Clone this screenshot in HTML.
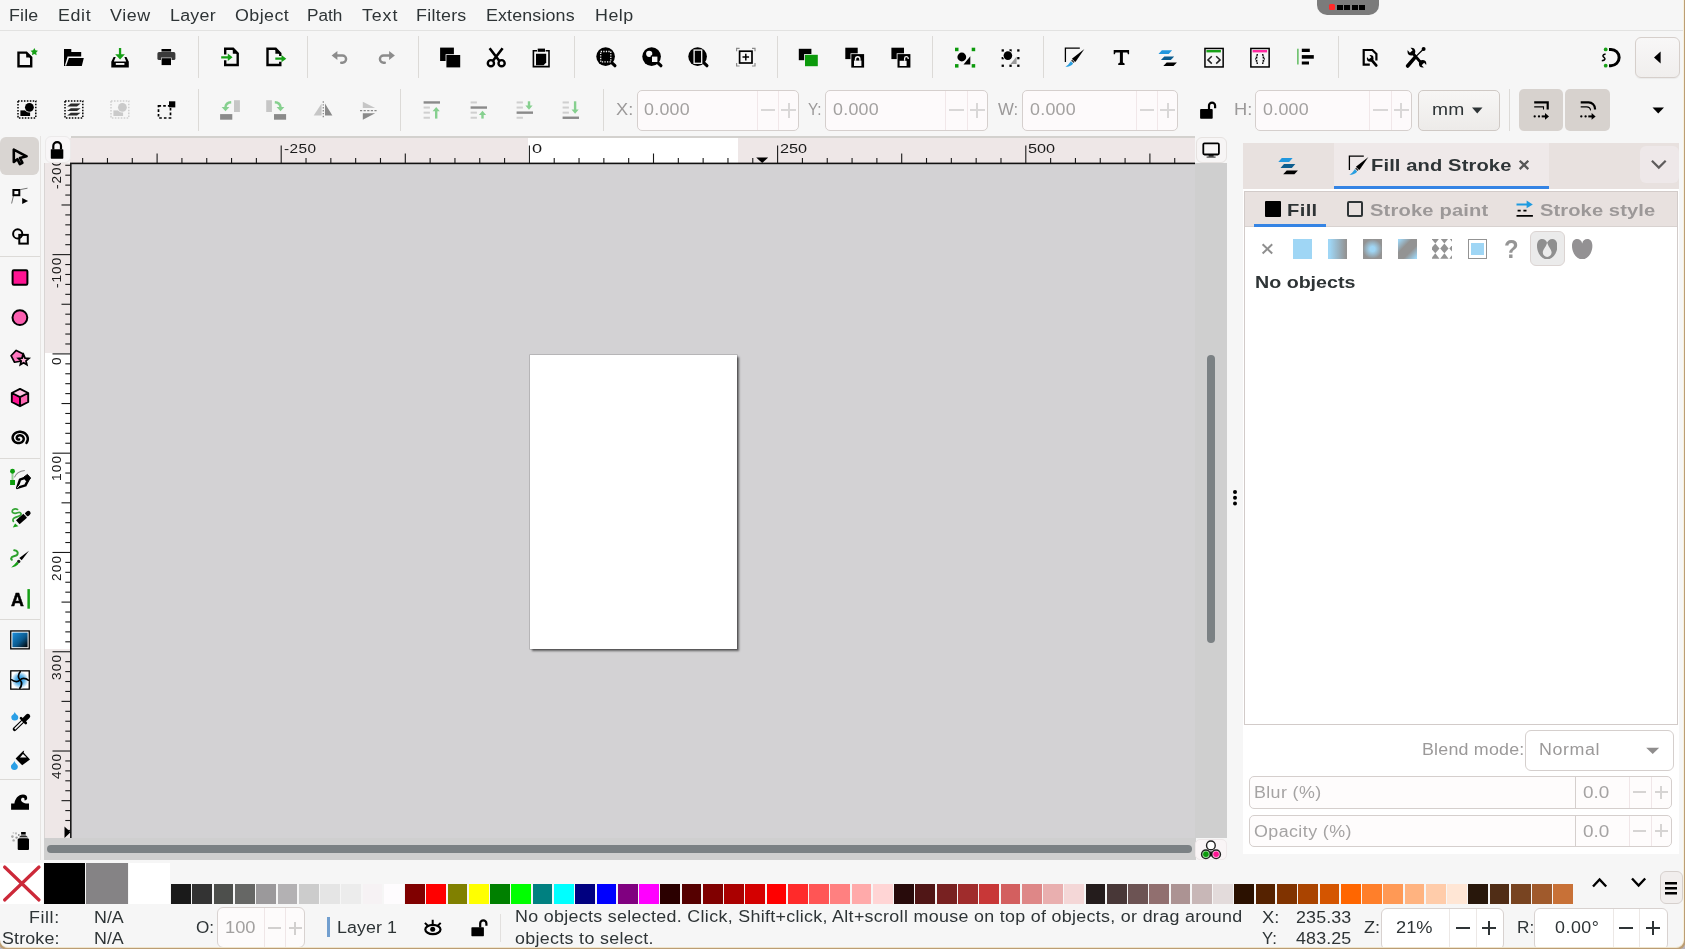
<!DOCTYPE html>
<html><head><meta charset="utf-8"><title>Inkscape</title><style>
html,body{margin:0;padding:0;}
body{width:1685px;height:949px;overflow:hidden;background:#b9b4bd;font-family:"Liberation Sans",sans-serif;}
#w{will-change:transform;position:absolute;left:0;top:0;width:1683px;height:946.9px;background:#f6f6f6;overflow:hidden;border-right:1px solid #f7f0dc;border-bottom:0.7px solid #efe4cc;border-radius:0 0 8px 8px;box-shadow:0 0 0 2.2px #bb9d74;}
#w div,#w svg,#w span{position:absolute;}
.t{white-space:nowrap;line-height:20px;transform-origin:left center;}
</style></head><body><div id="w">
<div style="left:0.00px;top:0.00px;width:1685.00px;height:30.00px;background:#f6f6f6;border-bottom:1px solid #e2e2e1;"></div>
<span class="t" style="left:9.47px;top:5.53px;font-size:15.80px;color:#2e3436;letter-spacing:0.155px;transform:scaleX(1.1300);">File</span>
<span class="t" style="left:58.47px;top:5.53px;font-size:15.80px;color:#2e3436;letter-spacing:0.540px;transform:scaleX(1.1300);">Edit</span>
<span class="t" style="left:109.57px;top:5.53px;font-size:15.80px;color:#2e3436;letter-spacing:0.536px;transform:scaleX(1.1300);">View</span>
<span class="t" style="left:170.07px;top:5.53px;font-size:15.80px;color:#2e3436;letter-spacing:0.229px;transform:scaleX(1.1300);">Layer</span>
<span class="t" style="left:234.67px;top:5.53px;font-size:15.80px;color:#2e3436;letter-spacing:0.371px;transform:scaleX(1.1300);">Object</span>
<span class="t" style="left:307.27px;top:5.53px;font-size:15.80px;color:#2e3436;transform:scaleX(1.0890);">Path</span>
<span class="t" style="left:361.77px;top:5.53px;font-size:15.80px;color:#2e3436;letter-spacing:0.782px;transform:scaleX(1.1300);">Text</span>
<span class="t" style="left:415.87px;top:5.53px;font-size:15.80px;color:#2e3436;letter-spacing:0.250px;transform:scaleX(1.1300);">Filters</span>
<span class="t" style="left:486.07px;top:5.53px;font-size:15.80px;color:#2e3436;letter-spacing:0.124px;transform:scaleX(1.1300);">Extensions</span>
<span class="t" style="left:594.97px;top:5.53px;font-size:15.80px;color:#2e3436;letter-spacing:0.435px;transform:scaleX(1.1300);">Help</span>
<div style="left:1317.20px;top:-10.00px;width:61.70px;height:24.70px;background:#7b7b7b;border-radius:10px;"></div><div style="left:1329.10px;top:4.40px;width:5.90px;height:5.50px;background:#ff2a2a;border-radius:1.5px;"></div><div style="left:1337.10px;top:5.10px;width:5.70px;height:4.80px;background:#000;"></div><div style="left:1344.20px;top:5.10px;width:5.70px;height:4.80px;background:#000;"></div><div style="left:1352.10px;top:5.10px;width:5.70px;height:4.80px;background:#000;"></div><div style="left:1359.20px;top:5.10px;width:5.70px;height:4.80px;background:#000;"></div>
<div style="left:198.00px;top:36.00px;width:1.00px;height:42.00px;background:#dcdad7;"></div>
<div style="left:307.00px;top:36.00px;width:1.00px;height:42.00px;background:#dcdad7;"></div>
<div style="left:418.00px;top:36.00px;width:1.00px;height:42.00px;background:#dcdad7;"></div>
<div style="left:574.00px;top:36.00px;width:1.00px;height:42.00px;background:#dcdad7;"></div>
<div style="left:777.00px;top:36.00px;width:1.00px;height:42.00px;background:#dcdad7;"></div>
<div style="left:932.00px;top:36.00px;width:1.00px;height:42.00px;background:#dcdad7;"></div>
<div style="left:1043.00px;top:36.00px;width:1.00px;height:42.00px;background:#dcdad7;"></div>
<div style="left:1338.00px;top:36.00px;width:1.00px;height:42.00px;background:#dcdad7;"></div>
<svg style="left:14.00px;top:45.00px" width="24" height="24" viewBox="0 0 24 24"><path d="M4.5 7.6 H12.4 L17.2 12.4 V21.2 H4.5 Z" fill="none" stroke="#000" stroke-width="2.4" stroke-linejoin="miter"/><path d="M12.2 7 V12.6 H17.8 Z" fill="#000"/><polygon points="20.30,2.90 21.48,5.28 24.10,5.66 22.20,7.52 22.65,10.14 20.30,8.90 17.95,10.14 18.40,7.52 16.50,5.66 19.12,5.28" fill="#17a017"/></svg>
<svg style="left:61.00px;top:45.00px" width="24" height="24" viewBox="0 0 24 24"><path d="M3 4 H10.3 V6.9 H20.2 V11.4 H6.6 L4.2 19.6 L3 19.6 Z" fill="#000"/><path d="M7.9 12.9 H22.8 L20.8 21 H3 L5 21 Z" fill="#000"/><path d="M3 21 V17 L4.6 21 Z" fill="#000"/></svg>
<svg style="left:107.00px;top:45.00px" width="24" height="24" viewBox="0 0 24 24"><path d="M6.6 12 L4.3 16.8 V22.4 H21.8 V16.8 L19.5 12 H17.4 L19.2 16.6 H6.9 L8.7 12 Z" fill="#000"/><rect x="8.8" y="18" width="8.6" height="1.9" fill="#f6f6f6"/><path d="M11.9 2.9 H14.2 V9.3 H17.9 L13.05 14.6 L8.2 9.3 H11.9 Z" fill="#17a017"/></svg>
<svg style="left:154.00px;top:45.00px" width="24" height="24" viewBox="0 0 24 24"><rect x="7.5" y="4" width="9.6" height="2.6" fill="#000"/><rect x="3.4" y="7.1" width="18" height="8" rx="1.6" fill="#3a3a3a"/><rect x="7.0" y="12.6" width="10.6" height="7.9" fill="#f6f6f6"/><rect x="7.6" y="13.2" width="9.4" height="6.9" fill="#000"/></svg>
<svg style="left:218.00px;top:45.00px" width="24" height="24" viewBox="0 0 24 24"><path d="M7.2 9.4 V3.8 H15.1 L19.7 8.4 V20 H7.2 V15.2" fill="none" stroke="#000" stroke-width="2.4"/><path d="M14.8 3.2 V8.7 H20.3 Z" fill="#000"/><path d="M3.2 11.2 H9.8 V8.6 L14.6 12.3 L9.8 16 V13.4 H3.2 Z" fill="#17a017"/></svg>
<svg style="left:263.00px;top:45.00px" width="24" height="24" viewBox="0 0 24 24"><path d="M17.3 11 V8.4 L12.7 3.8 H4.5 V20 H17.3 V16.8" fill="none" stroke="#000" stroke-width="2.4"/><path d="M12.4 3.2 V8.7 H17.9 Z" fill="#000"/><path d="M12.3 12.6 H18.5 V10.1 L23.3 13.7 L18.5 17.3 V14.8 H12.3 Z" fill="#17a017"/></svg>
<svg style="left:328.00px;top:45.00px" width="24" height="24" viewBox="0 0 24 24"><path d="M8.5 10.5 H14.5 A3.6 3.6 0 0 1 14.5 17.7 H13.2" fill="none" stroke="#8c8c8c" stroke-width="2.4" stroke-linecap="round"/><path d="M3.6 10.5 L9.4 6 V15 Z" fill="#8c8c8c"/></svg>
<svg style="left:374.00px;top:45.00px" width="24" height="24" viewBox="0 0 24 24"><path d="M15.5 10.5 H9.5 A3.6 3.6 0 0 0 9.5 17.7 H10.8" fill="none" stroke="#8c8c8c" stroke-width="2.4" stroke-linecap="round"/><path d="M20.9 10.5 L15.1 6 V15 Z" fill="#8c8c8c"/></svg>
<svg style="left:437.00px;top:45.00px" width="24" height="24" viewBox="0 0 24 24"><rect x="3.1" y="2.6" width="13.8" height="13.4" fill="#000"/><rect x="8.6" y="9.2" width="15.4" height="14" fill="#f6f6f6"/><rect x="9.4" y="10" width="13.8" height="12.4" fill="#000"/></svg>
<svg style="left:484.00px;top:45.00px" width="24" height="24" viewBox="0 0 24 24"><path d="M5.6 3.2 L15.6 16.2 M18.6 3.2 L8.6 16.2" stroke="#000" stroke-width="2.6" fill="none"/><circle cx="6.9" cy="18.2" r="3.1" fill="none" stroke="#000" stroke-width="2.4"/><circle cx="17.6" cy="18.2" r="3.1" fill="none" stroke="#000" stroke-width="2.4"/></svg>
<svg style="left:529.00px;top:45.00px" width="24" height="24" viewBox="0 0 24 24"><path d="M8 5.7 H4.4 V21.6 H20 V5.7 H16.6" fill="none" stroke="#000" stroke-width="1.6"/><rect x="8.7" y="3.6" width="7.3" height="3.2" fill="#000"/><path d="M7 8.8 H17.2 V17.6 L14.6 20.2 H7 Z" fill="#000"/></svg>
<svg style="left:594.00px;top:45.00px" width="24" height="24" viewBox="0 0 24 24"><circle cx="11.6" cy="11.6" r="9.3" fill="#000"/><path d="M17.4 17.4 L20.9 20.7" stroke="#000" stroke-width="3.2" stroke-linecap="round"/><rect x="6.7" y="6.5" width="10.1" height="10.3" fill="none" stroke="#f6f6f6" stroke-width="1.3" stroke-dasharray="1.3 1.25"/></svg>
<svg style="left:640.00px;top:45.00px" width="24" height="24" viewBox="0 0 24 24"><circle cx="11.6" cy="11.6" r="9.3" fill="#000"/><path d="M17.4 17.4 L20.9 20.7" stroke="#000" stroke-width="3.2" stroke-linecap="round"/><circle cx="9.2" cy="8.8" r="3.1" fill="#f6f6f6"/><rect x="10.8" y="10.4" width="7.6" height="7.6" fill="#000"/><rect x="12" y="11.6" width="5.4" height="5.4" fill="#f6f6f6"/></svg>
<svg style="left:686.00px;top:45.00px" width="24" height="24" viewBox="0 0 24 24"><circle cx="11.6" cy="11.6" r="9.3" fill="#000"/><path d="M17.4 17.4 L20.9 20.7" stroke="#000" stroke-width="3.2" stroke-linecap="round"/><rect x="8.1" y="5.1" width="7.6" height="13.2" fill="none" stroke="#f6f6f6" stroke-width="1.3"/></svg>
<svg style="left:733.00px;top:45.00px" width="24" height="24" viewBox="0 0 24 24"><rect x="6.6" y="6.2" width="12.4" height="11.8" fill="none" stroke="#000" stroke-width="1.7"/><path d="M12.8 8.8 V15.4 M9.5 12.1 H16.1" stroke="#000" stroke-width="1.5"/><path d="M3.6 6.2 V3.3 H6.6 M19 3.3 H22 V6.2 M22 18 V21 H19 M6.6 21 H3.6 V18" fill="none" stroke="#8a8a8a" stroke-width="1.2"/></svg>
<svg style="left:795.00px;top:45.00px" width="24" height="24" viewBox="0 0 24 24"><rect x="3.8" y="3.8" width="12.6" height="11.4" fill="#000"/><rect x="9.2" y="9" width="14.4" height="13" fill="#f6f6f6"/><rect x="10" y="9.8" width="12.8" height="11.4" fill="#0c9a0c"/></svg>
<svg style="left:842.00px;top:45.00px" width="24" height="24" viewBox="0 0 24 24"><rect x="3.3" y="2.7" width="12.4" height="11.4" fill="#000"/><rect x="8.5" y="8.3" width="14.4" height="15" fill="#f6f6f6"/><rect x="9.3" y="9.1" width="12.8" height="13.5" fill="#000"/><rect x="12" y="15.6" width="7.4" height="5.4" fill="#f6f6f6"/><path d="M13.5 15.8 V14 A2.2 2.2 0 0 1 17.9 14 V15.8" fill="none" stroke="#f6f6f6" stroke-width="1.4"/></svg>
<svg style="left:888.00px;top:45.00px" width="24" height="24" viewBox="0 0 24 24"><rect x="3.4" y="2.7" width="12.6" height="11.4" fill="#000"/><rect x="8.7" y="8.3" width="14.6" height="15" fill="#f6f6f6"/><rect x="9.5" y="9.1" width="12.9" height="13.5" fill="#000"/><rect x="11.6" y="15.8" width="7" height="5.2" fill="#f6f6f6"/><path d="M16.6 15.8 V13.4 A1.8 1.8 0 0 1 20.2 13.4 V14" fill="none" stroke="#f6f6f6" stroke-width="1.3"/></svg>
<svg style="left:952.00px;top:45.00px" width="24" height="24" viewBox="0 0 24 24"><rect x="3.00" y="2.70" width="3.50" height="3.50" fill="#0c9a0c"/><rect x="19.70" y="2.70" width="3.50" height="3.50" fill="#0c9a0c"/><rect x="3.00" y="19.10" width="3.50" height="3.50" fill="#0c9a0c"/><rect x="19.70" y="19.10" width="3.50" height="3.50" fill="#0c9a0c"/><path d="M11.5 19.4 H18.3 V11.2 Z" fill="#000"/><circle cx="9.8" cy="12" r="5.2" fill="#f6f6f6"/><circle cx="9.8" cy="12" r="4.4" fill="#000"/></svg>
<svg style="left:999.00px;top:45.00px" width="24" height="24" viewBox="0 0 24 24"><path d="M11.5 19 H17.6 V11.4 Z" fill="#999"/><rect x="2.60" y="4.30" width="2.3" height="2.3" fill="#000"/><rect x="2.60" y="12.00" width="2.3" height="2.3" fill="#000"/><rect x="2.60" y="19.60" width="2.3" height="2.3" fill="#000"/><rect x="10.40" y="4.30" width="2.3" height="2.3" fill="#000"/><rect x="10.40" y="19.60" width="2.3" height="2.3" fill="#000"/><rect x="18.20" y="4.30" width="2.3" height="2.3" fill="#000"/><rect x="18.20" y="12.00" width="2.3" height="2.3" fill="#000"/><rect x="18.20" y="19.60" width="2.3" height="2.3" fill="#000"/><circle cx="8.9" cy="10.6" r="5.1" fill="#f6f6f6"/><circle cx="8.9" cy="10.6" r="4.3" fill="#000"/></svg>
<svg style="left:1062.00px;top:45.00px" width="24" height="24" viewBox="0 0 24 24"><path d="M3.4 17 V3.1 H17.8" fill="none" stroke="#000" stroke-width="1.3"/><path d="M22.4 4 L13.4 16.9 L9.9 13.8 Z" fill="#000"/><path d="M10.2 14.5 L12.7 16.7 L11.6 18 L9.1 15.8 Z" fill="#444"/><path d="M8.8 16.3 L11.2 18.4 C9.8 20.6 6.6 21.8 3.4 21.8 C6.2 20 7.2 18.6 8.8 16.3 Z" fill="#2a9fe0"/></svg>
<svg style="left:1109.00px;top:45.00px" width="24" height="24" viewBox="0 0 24 24"><path d="M4.7 5 H20.1 V9.2 H18.9 L18.3 7.5 H13.9 V17.6 L15.6 18.4 V19.9 H9.2 V18.4 L10.9 17.6 V7.5 H6.5 L5.9 9.2 H4.7 Z" fill="#000"/></svg>
<svg style="left:1155.00px;top:45.00px" width="24" height="24" viewBox="0 0 24 24"><path d="M6.90 5.30 H17.10 L13.70 9.00 H3.50 Z" fill="#2197de"/><path d="M9.30 11.40 H19.20 L15.80 15.10 H5.90 Z" fill="#0c5d8f"/><path d="M11.70 17.50 H21.90 L18.50 21.10 H8.30 Z" fill="#000"/></svg>
<svg style="left:1201.00px;top:45.00px" width="24" height="24" viewBox="0 0 24 24"><rect x="3.95" y="3.45" width="18.2" height="18.5" fill="none" stroke="#000" stroke-width="1.5"/><rect x="5.4" y="5" width="14.5" height="2.4" fill="#17a017"/><path d="M10.8 11.2 L6.9 14.9 L10.8 18.6 M15.2 11.2 L19.1 14.9 L15.2 18.6" fill="none" stroke="#222" stroke-width="1.5"/></svg>
<svg style="left:1248.00px;top:45.00px" width="24" height="24" viewBox="0 0 24 24"><rect x="2.85" y="3.45" width="18.3" height="18.5" fill="none" stroke="#000" stroke-width="1.5"/><rect x="4.6" y="5" width="14.5" height="2.4" fill="#ff2aa0"/><path d="M10 9.8 C8.4 9.8 8.6 11 8.6 12.2 C8.6 13.4 8.2 13.9 7.2 13.9 C8.2 13.9 8.6 14.5 8.6 15.6 C8.6 17 8.4 18.2 10 18.2 M14 9.8 C15.6 9.8 15.4 11 15.4 12.2 C15.4 13.4 15.8 13.9 16.8 13.9 C15.8 13.9 15.4 14.5 15.4 15.6 C15.4 17 15.6 18.2 14 18.2" fill="none" stroke="#000" stroke-width="1.6" stroke-dasharray="1.6 0.9"/></svg>
<svg style="left:1294.00px;top:45.00px" width="24" height="24" viewBox="0 0 24 24"><rect x="3.3" y="3.7" width="1.2" height="15.8" fill="#3dae3d"/><rect x="7.8" y="3.7" width="8" height="3.3" fill="#000"/><rect x="7.8" y="10.1" width="12" height="3.6" fill="#000"/><rect x="7.8" y="16.5" width="7.2" height="3" fill="#000"/></svg>
<svg style="left:1357.00px;top:45.00px" width="24" height="24" viewBox="0 0 24 24"><path d="M12.8 19.7 H6.7 V5 H15.4 L19.4 9 V15.6" fill="none" stroke="#000" stroke-width="2.2"/><path d="M13.20 13.40 L19.20 20.40" stroke="#000" stroke-width="2.80" stroke-linecap="round"/><circle cx="13.20" cy="13.40" r="3.30" fill="#000"/><path d="M13.07 13.25 L10.08 9.76" stroke="#f6f6f6" stroke-width="3.13"/></svg>
<svg style="left:1404.00px;top:45.00px" width="24" height="24" viewBox="0 0 24 24"><path d="M7.40 6.60 L17.60 18.40" stroke="#000" stroke-width="2.90" stroke-linecap="round"/><circle cx="7.40" cy="6.60" r="3.90" fill="#000"/><path d="M7.27 6.45 L3.87 2.51" stroke="#f6f6f6" stroke-width="3.70"/><circle cx="18.6" cy="18.8" r="3.7" fill="#000"/><path d="M18.9 19 L23.5 23.8" stroke="#f6f6f6" stroke-width="3.4"/><path d="M3.6 21 L11 12.4" stroke="#000" stroke-width="3.6" stroke-linecap="round"/><path d="M11 12.4 L19.3 4.2" stroke="#000" stroke-width="1.3"/><circle cx="19.6" cy="3.9" r="2" fill="#000"/></svg>
<svg style="left:1599.00px;top:45.00px" width="24" height="24" viewBox="0 0 24 24"><path d="M10 4.4 H12 A8.15 8.15 0 0 1 12 20.7 H10" fill="none" stroke="#000" stroke-width="3"/><circle cx="6.7" cy="4.4" r="1.9" fill="#17a017"/><circle cx="6.7" cy="20.7" r="1.9" fill="#17a017"/><path d="M6.6 9 C3 9.6 3.6 11.4 5 12.4 C6.6 13.6 6.4 15.4 2.8 15.8" fill="none" stroke="#000" stroke-width="1.5"/></svg>
<div style="left:1635.40px;top:36.60px;width:44.50px;height:41.90px;border:1px solid #d6cfcb;border-radius:6px;background:linear-gradient(#f8f7f7,#f0eeed);box-sizing:border-box;box-shadow:0 1px 1px rgba(0,0,0,0.05);"></div>
<svg style="left:1650.00px;top:50.00px" width="14" height="16" viewBox="0 0 14 16"><path d="M10.6 1.5 L4 7.5 L10.6 13.5 Z" fill="#000"/></svg>
<div style="left:198.00px;top:88.50px;width:1.00px;height:42.50px;background:#dcdad7;"></div>
<div style="left:400.00px;top:88.50px;width:1.00px;height:42.50px;background:#dcdad7;"></div>
<div style="left:603.00px;top:88.50px;width:1.00px;height:42.50px;background:#dcdad7;"></div>
<div style="left:1509.00px;top:88.50px;width:1.00px;height:42.50px;background:#dcdad7;"></div>
<svg style="left:14.00px;top:97.00px" width="24" height="24" viewBox="0 0 24 24"><rect x="4" y="3.9" width="17.8" height="17" fill="none" stroke="#000" stroke-width="1.5" stroke-dasharray="1.55 1.4"/><rect x="6.4" y="13.4" width="9.7" height="5.6" fill="#000"/><circle cx="15.4" cy="10.3" r="5.3" fill="#f6f6f6"/><circle cx="15.4" cy="10.3" r="4.4" fill="#000"/></svg>
<svg style="left:61.00px;top:97.00px" width="24" height="24" viewBox="0 0 24 24"><rect x="4" y="3.9" width="17.8" height="17" fill="none" stroke="#000" stroke-width="1.5" stroke-dasharray="1.55 1.4"/><path d="M9.80 6.60 H19.60 L16.00 9.40 H6.20 Z" fill="#2b2b2b"/><path d="M9.80 11.20 H19.60 L16.00 14.00 H6.20 Z" fill="#2b2b2b"/><path d="M9.80 15.80 H19.60 L16.00 18.60 H6.20 Z" fill="#2b2b2b"/></svg>
<svg style="left:107.00px;top:97.00px" width="24" height="24" viewBox="0 0 24 24"><rect x="4" y="3.9" width="17.8" height="17" fill="none" stroke="#cfcfcf" stroke-width="1.5" stroke-dasharray="1.55 1.4"/><rect x="6.4" y="13.4" width="9.7" height="5.6" fill="#cacaca"/><circle cx="15.4" cy="10.3" r="5.3" fill="#f6f6f6"/><circle cx="15.4" cy="10.3" r="4.4" fill="#cacaca"/></svg>
<svg style="left:154.00px;top:97.00px" width="24" height="24" viewBox="0 0 24 24"><rect x="4.5" y="8.8" width="12" height="12.2" fill="none" stroke="#000" stroke-width="1.7" stroke-dasharray="2.6 2.1"/><rect x="15" y="4.3" width="6.3" height="6.1" fill="#000"/></svg>
<svg style="left:218.00px;top:97.00px" width="24" height="24" viewBox="0 0 24 24"><rect x="16" y="3.2" width="5.9" height="11.8" fill="#c6c6c6"/><rect x="2.1" y="17.1" width="12.2" height="5.6" fill="#8a8a8a"/><path d="M13.2 5.2 C9.8 5.4 7.6 7.4 7.4 10.6" fill="none" stroke="#86d08f" stroke-width="2.4"/><path d="M3.6 10 H11.4 L7.5 14.3 Z" fill="#86d08f"/></svg>
<svg style="left:263.00px;top:97.00px" width="24" height="24" viewBox="0 0 24 24"><rect x="3.2" y="3.2" width="5.7" height="11.8" fill="#c6c6c6"/><rect x="11" y="17.1" width="12.1" height="5.6" fill="#8a8a8a"/><path d="M11.8 5.2 C15.2 5.4 17.4 7.4 17.6 10.6" fill="none" stroke="#86d08f" stroke-width="2.4"/><path d="M21.4 10 H13.6 L17.5 14.3 Z" fill="#86d08f"/></svg>
<svg style="left:310.00px;top:97.00px" width="24" height="24" viewBox="0 0 24 24"><path d="M3.7 18.4 H11.6 V6.6 Z" fill="#c6c6c6"/><path d="M15 6.6 V18.4 H22.4 Z" fill="#8a8a8a"/><path d="M13.3 4.3 V21.4" stroke="#8a8a8a" stroke-width="1.3" stroke-dasharray="1.4 1.5"/></svg>
<svg style="left:356.00px;top:97.00px" width="24" height="24" viewBox="0 0 24 24"><path d="M6.8 4.7 V11.1 H19.2 Z" fill="#c6c6c6"/><path d="M6.8 16.2 H19.2 L6.8 22.7 Z" fill="#8a8a8a"/><path d="M4 13.6 H22" stroke="#8a8a8a" stroke-width="1.3" stroke-dasharray="2.2 1.4"/></svg>
<svg style="left:419.00px;top:97.00px" width="24" height="24" viewBox="0 0 24 24"><rect x="4.6" y="4.25" width="16.4" height="2.4" fill="#8a8a8a"/><rect x="4.6" y="9.55" width="6.3" height="2.0" fill="#cfcfcf"/><rect x="4.6" y="14.65" width="6.3" height="2.0" fill="#cfcfcf"/><rect x="4.6" y="19.75" width="6.3" height="2.0" fill="#cfcfcf"/><rect x="16.00" y="13.00" width="2.4" height="8.60" fill="#86d08f"/><path d="M17.20 10.00 L20.80 14.20 L13.60 14.20 Z" fill="#86d08f"/></svg>
<svg style="left:466.00px;top:97.00px" width="24" height="24" viewBox="0 0 24 24"><rect x="4.6" y="4.45" width="6.3" height="2.0" fill="#cfcfcf"/><rect x="4.6" y="9.35" width="16.4" height="2.4" fill="#8a8a8a"/><rect x="4.6" y="14.65" width="6.3" height="2.0" fill="#cfcfcf"/><rect x="4.6" y="19.75" width="6.3" height="2.0" fill="#cfcfcf"/><rect x="15.30" y="16.70" width="2.4" height="4.90" fill="#86d08f"/><path d="M16.50 13.70 L20.10 17.90 L12.90 17.90 Z" fill="#86d08f"/></svg>
<svg style="left:512.00px;top:97.00px" width="24" height="24" viewBox="0 0 24 24"><rect x="4.6" y="4.45" width="6.3" height="2.0" fill="#cfcfcf"/><rect x="4.6" y="9.55" width="6.3" height="2.0" fill="#cfcfcf"/><rect x="4.6" y="14.45" width="16.4" height="2.4" fill="#8a8a8a"/><rect x="4.6" y="19.75" width="6.3" height="2.0" fill="#cfcfcf"/><rect x="15.80" y="4.30" width="2.4" height="5.50" fill="#86d08f"/><path d="M17.00 12.80 L20.60 8.60 L13.40 8.60 Z" fill="#86d08f"/></svg>
<svg style="left:558.00px;top:97.00px" width="24" height="24" viewBox="0 0 24 24"><rect x="4.6" y="4.45" width="6.3" height="2.0" fill="#cfcfcf"/><rect x="4.6" y="9.55" width="6.3" height="2.0" fill="#cfcfcf"/><rect x="4.6" y="14.65" width="6.3" height="2.0" fill="#cfcfcf"/><rect x="4.6" y="19.55" width="16.4" height="2.4" fill="#8a8a8a"/><rect x="15.90" y="4.30" width="2.4" height="9.40" fill="#86d08f"/><path d="M17.10 16.70 L20.70 12.50 L13.50 12.50 Z" fill="#86d08f"/></svg>
<span class="t" style="left:615.97px;top:99.53px;font-size:15.80px;color:#9b9999;transform:scaleX(1.1519);">X:</span>
<div style="left:636.60px;top:89.50px;width:162.70px;height:41.20px;border:1px solid #d5cfcd;border-radius:5px;background:#fdfafb;box-sizing:border-box;"></div><div style="left:756.60px;top:90.50px;width:1.00px;height:39.20px;background:#f1e7e9;"></div><div style="left:778.00px;top:90.50px;width:1.00px;height:39.20px;background:#f1e7e9;"></div><span class="t" style="left:644.47px;top:99.53px;font-size:15.80px;color:#a3a1a0;letter-spacing:0.225px;transform:scaleX(1.1300);">0.000</span><div style="left:760.50px;top:109.20px;width:14.60px;height:1.80px;background:#d9d7d7;"></div><div style="left:781.15px;top:109.20px;width:15.00px;height:1.80px;background:#d9d7d7;"></div><div style="left:787.75px;top:102.60px;width:1.80px;height:15.00px;background:#d9d7d7;"></div>
<span class="t" style="left:808.27px;top:99.53px;font-size:15.80px;color:#9b9999;transform:scaleX(0.9672);">Y:</span>
<div style="left:825.30px;top:89.50px;width:162.70px;height:41.20px;border:1px solid #d5cfcd;border-radius:5px;background:#fdfafb;box-sizing:border-box;"></div><div style="left:945.30px;top:90.50px;width:1.00px;height:39.20px;background:#f1e7e9;"></div><div style="left:966.70px;top:90.50px;width:1.00px;height:39.20px;background:#f1e7e9;"></div><span class="t" style="left:833.17px;top:99.53px;font-size:15.80px;color:#a3a1a0;letter-spacing:0.225px;transform:scaleX(1.1300);">0.000</span><div style="left:949.20px;top:109.20px;width:14.60px;height:1.80px;background:#d9d7d7;"></div><div style="left:969.85px;top:109.20px;width:15.00px;height:1.80px;background:#d9d7d7;"></div><div style="left:976.45px;top:102.60px;width:1.80px;height:15.00px;background:#d9d7d7;"></div>
<span class="t" style="left:997.67px;top:99.53px;font-size:15.80px;color:#9b9999;transform:scaleX(1.0620);">W:</span>
<div style="left:1021.90px;top:89.50px;width:156.40px;height:41.20px;border:1px solid #d5cfcd;border-radius:5px;background:#fdfafb;box-sizing:border-box;"></div><div style="left:1135.60px;top:90.50px;width:1.00px;height:39.20px;background:#f1e7e9;"></div><div style="left:1157.30px;top:90.50px;width:1.00px;height:39.20px;background:#f1e7e9;"></div><span class="t" style="left:1029.77px;top:99.53px;font-size:15.80px;color:#a3a1a0;letter-spacing:0.225px;transform:scaleX(1.1300);">0.000</span><div style="left:1139.65px;top:109.20px;width:14.60px;height:1.80px;background:#d9d7d7;"></div><div style="left:1160.30px;top:109.20px;width:15.00px;height:1.80px;background:#d9d7d7;"></div><div style="left:1166.90px;top:102.60px;width:1.80px;height:15.00px;background:#d9d7d7;"></div>
<svg style="left:1196.00px;top:98.00px" width="24" height="24" viewBox="0 0 24 24"><rect x="4.1" y="11.1" width="12.6" height="9.6" rx="0.8" fill="#000"/><path d="M13 11.6 V7.6 A3.05 3.05 0 0 1 19.1 7.6 V10.3" fill="none" stroke="#000" stroke-width="2.2"/></svg>
<span class="t" style="left:1233.57px;top:99.53px;font-size:15.80px;color:#9b9999;transform:scaleX(1.1580);">H:</span>
<div style="left:1255.20px;top:89.50px;width:156.80px;height:41.20px;border:1px solid #d5cfcd;border-radius:5px;background:#fdfafb;box-sizing:border-box;"></div><div style="left:1369.20px;top:90.50px;width:1.00px;height:39.20px;background:#f1e7e9;"></div><div style="left:1390.60px;top:90.50px;width:1.00px;height:39.20px;background:#f1e7e9;"></div><span class="t" style="left:1263.07px;top:99.53px;font-size:15.80px;color:#a3a1a0;letter-spacing:0.225px;transform:scaleX(1.1300);">0.000</span><div style="left:1373.10px;top:109.20px;width:14.60px;height:1.80px;background:#d9d7d7;"></div><div style="left:1393.80px;top:109.20px;width:15.00px;height:1.80px;background:#d9d7d7;"></div><div style="left:1400.40px;top:102.60px;width:1.80px;height:15.00px;background:#d9d7d7;"></div>
<div style="left:1418.00px;top:89.50px;width:82.00px;height:41.20px;border:1px solid #cfc9c5;border-radius:5px;background:linear-gradient(#f7f6f5,#edebe9);box-sizing:border-box;"></div>
<span class="t" style="left:1432.27px;top:99.53px;font-size:15.80px;color:#2e3436;letter-spacing:0.066px;transform:scaleX(1.2200);">mm</span>
<svg style="left:1470.00px;top:104.00px" width="14" height="12" viewBox="0 0 14 12"><path d="M2 3.5 H12.5 L7.25 9.5 Z" fill="#2e3436"/></svg>
<div style="left:1519.00px;top:89.00px;width:44.30px;height:42.00px;border-radius:5px;background:#d7d2ce;"></div>
<div style="left:1565.00px;top:89.00px;width:45.00px;height:42.00px;border-radius:5px;background:#d7d2ce;"></div>
<svg style="left:1529.00px;top:97.00px" width="24" height="24" viewBox="0 0 24 24"><path d="M5.2 5.4 H18.7 V12.5" fill="none" stroke="#000" stroke-width="2.2"/><path d="M5.2 9.9 H14.5 V12.5" fill="none" stroke="#000" stroke-width="1.1"/><circle cx="5.70" cy="19.4" r="1.15" fill="#000"/><circle cx="10.00" cy="19.4" r="1.15" fill="#000"/><rect x="12.70" y="18.4" width="5" height="2" fill="#000"/><path d="M16.00 16.1 L20.00 19.4 L16.00 22.7 Z" fill="#000"/></svg>
<svg style="left:1575.50px;top:97.00px" width="24" height="24" viewBox="0 0 24 24"><path d="M4.7 5.4 H12.6 A6.4 6.4 0 0 1 19 11.8 V12.5" fill="none" stroke="#000" stroke-width="2.2"/><path d="M4.7 9.9 H10.6 A4 4 0 0 1 14.6 13.4" fill="none" stroke="#000" stroke-width="1.1"/><circle cx="5.30" cy="19.4" r="1.15" fill="#000"/><circle cx="9.60" cy="19.4" r="1.15" fill="#000"/><rect x="12.30" y="18.4" width="5" height="2" fill="#000"/><path d="M15.60 16.1 L19.60 19.4 L15.60 22.7 Z" fill="#000"/></svg>
<svg style="left:1651.00px;top:104.00px" width="14" height="12" viewBox="0 0 14 12"><path d="M1.5 3.5 H13 L7.25 9.5 Z" fill="#000"/></svg>
<div style="left:0.00px;top:136.60px;width:39.30px;height:38.70px;border-radius:6px;background:#d9d5d2;"></div>
<div style="left:40.30px;top:136.00px;width:1.00px;height:724.00px;background:#e6e4e2;"></div>
<div style="left:0.00px;top:256.00px;width:40.00px;height:1.00px;background:#dcdad7;"></div>
<div style="left:0.00px;top:458.00px;width:40.00px;height:1.00px;background:#dcdad7;"></div>
<div style="left:0.00px;top:619.00px;width:40.00px;height:1.00px;background:#dcdad7;"></div>
<div style="left:0.00px;top:779.00px;width:40.00px;height:1.00px;background:#dcdad7;"></div>
<svg style="left:8.00px;top:144.00px" width="24" height="24" viewBox="0 0 24 24"><path d="M5.8 5.6 V18 L9.4 15.2 L11.9 20.1 L14.4 18.9 L12 14 L18.6 12.3 Z" fill="none" stroke="#000" stroke-width="2.6" stroke-linejoin="round"/></svg>
<svg style="left:8.00px;top:184.00px" width="24" height="24" viewBox="0 0 24 24"><path d="M12.3 5.6 L19.5 4.2 M5.4 12 L3.6 19.5" stroke="#777" stroke-width="1" fill="none"/><rect x="5.4" y="6" width="5.9" height="5.2" fill="none" stroke="#000" stroke-width="2"/><path d="M14.2 14.1 V20 L20.1 17 Z" fill="#000"/></svg>
<svg style="left:8.00px;top:225.00px" width="24" height="24" viewBox="0 0 24 24"><circle cx="9.7" cy="8.9" r="4.6" fill="none" stroke="#000" stroke-width="2"/><rect x="11.3" y="9.9" width="8.5" height="8.7" fill="none" stroke="#000" stroke-width="2"/><path d="M11.5 13.3 L14.2 10" stroke="#000" stroke-width="1"/></svg>
<svg style="left:8.00px;top:265.00px" width="24" height="24" viewBox="0 0 24 24"><rect x="4.6" y="5.3" width="14.8" height="14.5" rx="1.2" fill="#ff1493" stroke="#000" stroke-width="2"/></svg>
<svg style="left:8.00px;top:306.00px" width="24" height="24" viewBox="0 0 24 24"><circle cx="11.9" cy="11.6" r="7.4" fill="#fb5fb0" stroke="#000" stroke-width="2"/></svg>
<svg style="left:8.00px;top:346.00px" width="24" height="24" viewBox="0 0 24 24"><polygon points="8.21,4.40 14.86,7.64 13.83,14.98 6.54,16.26 3.06,9.72" fill="#ff78c0" stroke="#000" stroke-width="1.7" stroke-linejoin="round"/><polygon points="15.60,8.60 17.07,12.18 20.93,12.47 17.98,14.97 18.89,18.73 15.60,16.70 12.31,18.73 13.22,14.97 10.27,12.47 14.13,12.18" fill="#ffb4da" stroke="#000" stroke-width="1.7" stroke-linejoin="miter"/></svg>
<svg style="left:8.00px;top:386.00px" width="24" height="24" viewBox="0 0 24 24"><path d="M12 2.9 L20.2 7 L12 11.2 L3.8 7 Z" fill="#ffc4e2"/><path d="M3.8 7 L12 11.2 V20.2 L3.8 16 Z" fill="#ff1493"/><path d="M20.2 7 L12 11.2 V20.2 L20.2 16 Z" fill="#ff69b4"/><path d="M12 2.9 L20.2 7 V16 L12 20.2 L3.8 16 V7 Z M3.8 7 L12 11.2 L20.2 7 M12 11.2 V20.2" fill="none" stroke="#000" stroke-width="1.9" stroke-linejoin="round"/></svg>
<svg style="left:8.00px;top:426.00px" width="24" height="24" viewBox="0 0 24 24"><path d="M11.05 13.50 L10.86 13.54 L10.65 13.56 L10.42 13.56 L10.19 13.52 L9.97 13.45 L9.74 13.35 L9.52 13.22 L9.32 13.06 L9.15 12.87 L8.99 12.66 L8.88 12.42 L8.79 12.16 L8.75 11.88 L8.75 11.59 L8.80 11.29 L8.90 11.00 L9.05 10.71 L9.25 10.43 L9.49 10.17 L9.78 9.94 L10.11 9.74 L10.49 9.57 L10.89 9.44 L11.32 9.35 L11.77 9.32 L12.23 9.34 L12.70 9.41 L13.16 9.53 L13.60 9.72 L14.03 9.95 L14.42 10.24 L14.78 10.57 L15.08 10.95 L15.33 11.37 L15.52 11.82 L15.64 12.30 L15.69 12.80 L15.66 13.30 L15.55 13.81 L15.37 14.31 L15.10 14.80 L14.76 15.26 L14.34 15.68 L13.86 16.06 L13.32 16.39 L12.72 16.65 L12.07 16.86 L11.39 16.99 L10.69 17.04 L9.97 17.02 L9.25 16.91 L8.54 16.72 L7.86 16.46 L7.21 16.11 L6.62 15.69 L6.08 15.20 L5.62 14.64 L5.23 14.03 L4.94 13.38 L4.75 12.69 L4.66 11.97 L4.68 11.24 L4.81 10.51 L5.05 9.80 L5.40 9.10 L5.86 8.45 L6.42 7.84 L7.07 7.29 L7.81 6.81 L8.62 6.42 L9.49 6.11 L10.42 5.90 L11.38 5.80 L12.35 5.80 L13.33 5.91 L14.30 6.13 L15.23 6.45 L16.12 6.89 L16.94 7.42 L17.68 8.05 L18.34 8.76 L18.88 9.54 L19.31 10.39 L19.61 11.28 L19.78 12.21 L19.80 13.16 L19.69 14.12 L19.43 15.06 L19.02 15.98 L18.48 16.85" fill="none" stroke="#000" stroke-width="2.5" stroke-linecap="round" stroke-linejoin="round"/></svg>
<svg style="left:8.00px;top:467.00px" width="24" height="24" viewBox="0 0 24 24"><path d="M4.5 5 V14" stroke="#93d193" stroke-width="2"/><circle cx="4.5" cy="4.3" r="2.45" fill="#0d9d0d"/><rect x="2.1" y="13" width="4.9" height="5" fill="#0d9d0d"/><path d="M6.4 10.4 C8 6.4 11.6 4 16.8 3.5" fill="none" stroke="#8c8c8c" stroke-width="1.1"/><path d="M9.2 20.9 L12 12.6 L16.8 10.8 L19.6 14.2 L17.4 18.4 Z" fill="#f6f6f6" stroke="#000" stroke-width="2.5" stroke-linejoin="round"/><path d="M15.8 10.2 L19.4 7.4 L22.6 11 L20 14.8 Z" fill="#000" stroke="#000" stroke-width="1" stroke-linejoin="round"/><path d="M9.3 20.8 L14.4 15.2" stroke="#f6f6f6" stroke-width="0.9"/></svg>
<svg style="left:8.00px;top:506.00px" width="24" height="24" viewBox="0 0 24 24"><path d="M9.6 3.4 C7.4 2.4 4.4 3 4.2 5.2 C4 7.6 7.4 7.6 9.6 6.8 C11.8 6 13.6 6.6 13 8.6 C12.4 10.6 8.6 10.4 6.2 12 C4.8 13 4.6 14.4 5.4 15.4" fill="none" stroke="#36a636" stroke-width="1.7" stroke-linecap="round"/><path d="M9.8 16.3 L17.2 9.8" stroke="#000" stroke-width="5.4"/><path d="M19.3 8 L20.3 7.1" stroke="#000" stroke-width="4.6" stroke-linecap="round"/><path d="M15.6 6.6 L19.6 11.2" stroke="#f6f6f6" stroke-width="0.9"/><path d="M4.8 21.5 L7.1 17.4 L10.4 20.3 Z" fill="#17a017"/></svg>
<svg style="left:8.00px;top:546.00px" width="24" height="24" viewBox="0 0 24 24"><path d="M6.2 4.2 C9 4.4 10.4 6.6 9.4 8.4 C8.4 10.2 5.2 9.6 3.8 11.2 C3 12.2 3.2 13.2 3.8 13.8" fill="none" stroke="#2aa02a" stroke-width="2" stroke-linecap="round"/><path d="M21 4.8 L13.7 14.2 L11.3 12 Z" fill="#000"/><circle cx="10.7" cy="15.4" r="1.7" fill="#222"/><path d="M8.8 15.8 L10.8 17.6 C9.2 20 6.4 21.4 3.2 21.4 C5.4 19.8 7 18 8.8 15.8 Z" fill="#17a017"/></svg>
<svg style="left:8.00px;top:587.00px" width="24" height="24" viewBox="0 0 24 24"><text x="9.5" y="18.7" text-anchor="middle" font-family="Liberation Sans" font-weight="bold" font-size="17.8" stroke="#000" stroke-width="0.5">A</text><rect x="19.4" y="2.1" width="2.5" height="19.6" fill="#17a017"/></svg>
<svg style="left:8.00px;top:628.00px" width="24" height="24" viewBox="0 0 24 24"><defs><linearGradient id="gr1" x1="0" y1="0" x2="1" y2="1"><stop offset="0" stop-color="#1b8fdc"/><stop offset="0.55" stop-color="#0a5a8f"/><stop offset="1" stop-color="#000"/></linearGradient></defs><rect x="2.75" y="2.95" width="18.5" height="17.9" fill="#fff" stroke="#000" stroke-width="1.3"/><rect x="4.4" y="4.6" width="15.2" height="14.6" fill="url(#gr1)"/></svg>
<svg style="left:8.00px;top:668.00px" width="24" height="24" viewBox="0 0 24 24"><defs><radialGradient id="gr2"><stop offset="0" stop-color="#1b8fdc"/><stop offset="0.5" stop-color="#5fb4ea"/><stop offset="1" stop-color="#fff"/></radialGradient></defs><rect x="2.75" y="2.85" width="18.5" height="18.3" fill="#fff" stroke="#000" stroke-width="1.3"/><circle cx="12" cy="12" r="8.6" fill="url(#gr2)"/><path d="M3 11.4 C7 14.4 10 14 12 12 C14 10 17 9.6 21 12.6 M12.6 3 C9.6 7 10 10 12 12 C14 14 14.4 17 11.4 21" fill="none" stroke="#000" stroke-width="1.7"/></svg>
<svg style="left:8.00px;top:708.00px" width="24" height="24" viewBox="0 0 24 24"><path d="M6.80 3.70 C6.20 6.31 3.30 7.35 3.30 8.90 A3.50 3.50 0 0 0 10.30 8.90 C10.30 7.35 7.40 6.31 6.80 3.70 Z" fill="#2a9fe6"/><path d="M15.2 12.8 L6.6 21.2" stroke="#000" stroke-width="3.8" stroke-linecap="round"/><path d="M14.6 13.4 L7.2 20.6" stroke="#f6f6f6" stroke-width="1.5" stroke-linecap="round"/><path d="M13 10.2 L17.8 15" stroke="#000" stroke-width="2.6" stroke-linecap="round"/><path d="M16.4 11.6 L19.8 8.2" stroke="#000" stroke-width="4.8" stroke-linecap="round"/></svg>
<svg style="left:8.00px;top:748.00px" width="24" height="24" viewBox="0 0 24 24"><path d="M6.40 12.80 C5.80 15.56 2.95 16.66 2.95 18.55 A3.45 3.45 0 0 0 9.85 18.55 C9.85 16.66 7.00 15.56 6.40 12.80 Z" fill="#2a9fe6"/><path d="M14.6 3.4 L7.6 10.6 L14.2 17.2 L22 11.4 Z" fill="#000"/><path d="M12 9.4 L15 6 L18.6 9.6 Z" fill="#f6f6f6"/><path d="M14.6 3.4 L16.2 2.4 L15.6 5 Z" fill="#000"/></svg>
<svg style="left:8.00px;top:790.00px" width="24" height="24" viewBox="0 0 24 24"><path d="M3.1 19.8 V13.4 H6.4 C7 9 10 4.6 15 4.5 C17.8 4.5 19.4 6.2 19.2 8.2 C19 10 17.4 10.6 16.2 10.2 C17 9.4 16.6 7.8 15 7.8 C13.2 7.8 12.4 10 13.8 11.6 C14.8 12.8 16.4 13.4 18 13.4 H21 V19.8 Z" fill="#000"/></svg>
<svg style="left:8.00px;top:828.00px" width="24" height="24" viewBox="0 0 24 24"><rect x="9.7" y="10.5" width="11.3" height="11.5" rx="1" fill="#000"/><path d="M11 10.5 C11.2 8.4 12.6 7.6 13.4 7.6 H17.4 C18.4 7.6 19.6 8.4 19.8 10.5 Z" fill="#000"/><rect x="13.1" y="4" width="4.6" height="2.6" fill="#000"/><path d="M11 9.3 H19.8" stroke="#f6f6f6" stroke-width="0.9"/><circle cx="4.4" cy="8.6" r="1.3" fill="#aaa"/><circle cx="8" cy="5.4" r="1.1" fill="#bbb"/><circle cx="8.6" cy="9.6" r="1.2" fill="#999"/><circle cx="5.6" cy="12.4" r="1.2" fill="#aaa"/><circle cx="10.8" cy="7" r="0.9" fill="#888"/><circle cx="5.4" cy="4.8" r="0.9" fill="#ccc"/></svg>
<div style="left:71.00px;top:136.30px;width:1124.00px;height:1.80px;background:#d3d1ce;"></div>
<div style="left:70.00px;top:138.00px;width:1125.00px;height:25.00px;background:#eee7e7;"></div>
<div style="left:528.30px;top:138.00px;width:209.30px;height:25.00px;background:#fff;"></div>
<div style="left:44.00px;top:163.00px;width:27.00px;height:675.00px;background:#eee7e7;"></div>
<div style="left:44.00px;top:163.00px;width:1.00px;height:675.00px;background:#d9d5d4;"></div>
<div style="left:45.00px;top:352.60px;width:26.00px;height:296.00px;background:#fff;"></div>
<div style="left:71.00px;top:164.20px;width:1124.00px;height:673.80px;background:#d3d2d4;"></div>
<div style="left:529.60px;top:354.60px;width:207.20px;height:294.00px;background:#fff;box-shadow:1.6px 1.6px 2px rgba(0,0,0,0.55), 0 0 0 0.6px rgba(120,120,120,0.5);"></div>
<svg style="left:0.00px;top:0.00px" width="1230" height="860" viewBox="0 0 1230 860"><rect x="70" y="162.6" width="1125" height="1.6" fill="#111"/><rect x="70" y="163" width="1.6" height="675" fill="#1a1a1a"/><rect x="82.09" y="158.00" width="1.1" height="5.00" fill="#1a1a1a"/><rect x="106.91" y="158.00" width="1.1" height="5.00" fill="#1a1a1a"/><rect x="131.73" y="158.00" width="1.1" height="5.00" fill="#1a1a1a"/><rect x="156.55" y="153.50" width="1.1" height="9.50" fill="#1a1a1a"/><rect x="181.37" y="158.00" width="1.1" height="5.00" fill="#1a1a1a"/><rect x="206.19" y="158.00" width="1.1" height="5.00" fill="#1a1a1a"/><rect x="231.01" y="158.00" width="1.1" height="5.00" fill="#1a1a1a"/><rect x="255.83" y="158.00" width="1.1" height="5.00" fill="#1a1a1a"/><rect x="280.65" y="145.50" width="1.1" height="17.50" fill="#1a1a1a"/><rect x="305.47" y="158.00" width="1.1" height="5.00" fill="#1a1a1a"/><rect x="330.29" y="158.00" width="1.1" height="5.00" fill="#1a1a1a"/><rect x="355.11" y="158.00" width="1.1" height="5.00" fill="#1a1a1a"/><rect x="379.93" y="158.00" width="1.1" height="5.00" fill="#1a1a1a"/><rect x="404.75" y="153.50" width="1.1" height="9.50" fill="#1a1a1a"/><rect x="429.57" y="158.00" width="1.1" height="5.00" fill="#1a1a1a"/><rect x="454.39" y="158.00" width="1.1" height="5.00" fill="#1a1a1a"/><rect x="479.21" y="158.00" width="1.1" height="5.00" fill="#1a1a1a"/><rect x="504.03" y="158.00" width="1.1" height="5.00" fill="#1a1a1a"/><rect x="528.85" y="145.50" width="1.1" height="17.50" fill="#1a1a1a"/><rect x="553.67" y="158.00" width="1.1" height="5.00" fill="#1a1a1a"/><rect x="578.49" y="158.00" width="1.1" height="5.00" fill="#1a1a1a"/><rect x="603.31" y="158.00" width="1.1" height="5.00" fill="#1a1a1a"/><rect x="628.13" y="158.00" width="1.1" height="5.00" fill="#1a1a1a"/><rect x="652.95" y="153.50" width="1.1" height="9.50" fill="#1a1a1a"/><rect x="677.77" y="158.00" width="1.1" height="5.00" fill="#1a1a1a"/><rect x="702.59" y="158.00" width="1.1" height="5.00" fill="#1a1a1a"/><rect x="727.41" y="158.00" width="1.1" height="5.00" fill="#1a1a1a"/><rect x="752.23" y="158.00" width="1.1" height="5.00" fill="#1a1a1a"/><rect x="777.05" y="145.50" width="1.1" height="17.50" fill="#1a1a1a"/><rect x="801.87" y="158.00" width="1.1" height="5.00" fill="#1a1a1a"/><rect x="826.69" y="158.00" width="1.1" height="5.00" fill="#1a1a1a"/><rect x="851.51" y="158.00" width="1.1" height="5.00" fill="#1a1a1a"/><rect x="876.33" y="158.00" width="1.1" height="5.00" fill="#1a1a1a"/><rect x="901.15" y="153.50" width="1.1" height="9.50" fill="#1a1a1a"/><rect x="925.97" y="158.00" width="1.1" height="5.00" fill="#1a1a1a"/><rect x="950.79" y="158.00" width="1.1" height="5.00" fill="#1a1a1a"/><rect x="975.61" y="158.00" width="1.1" height="5.00" fill="#1a1a1a"/><rect x="1000.43" y="158.00" width="1.1" height="5.00" fill="#1a1a1a"/><rect x="1025.25" y="145.50" width="1.1" height="17.50" fill="#1a1a1a"/><rect x="1050.07" y="158.00" width="1.1" height="5.00" fill="#1a1a1a"/><rect x="1074.89" y="158.00" width="1.1" height="5.00" fill="#1a1a1a"/><rect x="1099.71" y="158.00" width="1.1" height="5.00" fill="#1a1a1a"/><rect x="1124.53" y="158.00" width="1.1" height="5.00" fill="#1a1a1a"/><rect x="1149.35" y="153.50" width="1.1" height="9.50" fill="#1a1a1a"/><rect x="1174.17" y="158.00" width="1.1" height="5.00" fill="#1a1a1a"/><rect x="65.30" y="164.72" width="5.70" height="1.1" fill="#1a1a1a"/><rect x="65.30" y="174.65" width="5.70" height="1.1" fill="#1a1a1a"/><rect x="65.30" y="184.57" width="5.70" height="1.1" fill="#1a1a1a"/><rect x="65.30" y="194.50" width="5.70" height="1.1" fill="#1a1a1a"/><rect x="61.50" y="204.43" width="9.50" height="1.1" fill="#1a1a1a"/><rect x="65.30" y="214.36" width="5.70" height="1.1" fill="#1a1a1a"/><rect x="65.30" y="224.29" width="5.70" height="1.1" fill="#1a1a1a"/><rect x="65.30" y="234.21" width="5.70" height="1.1" fill="#1a1a1a"/><rect x="65.30" y="244.14" width="5.70" height="1.1" fill="#1a1a1a"/><rect x="52.50" y="254.07" width="18.50" height="1.1" fill="#1a1a1a"/><rect x="65.30" y="264.00" width="5.70" height="1.1" fill="#1a1a1a"/><rect x="65.30" y="273.93" width="5.70" height="1.1" fill="#1a1a1a"/><rect x="65.30" y="283.85" width="5.70" height="1.1" fill="#1a1a1a"/><rect x="65.30" y="293.78" width="5.70" height="1.1" fill="#1a1a1a"/><rect x="61.50" y="303.71" width="9.50" height="1.1" fill="#1a1a1a"/><rect x="65.30" y="313.64" width="5.70" height="1.1" fill="#1a1a1a"/><rect x="65.30" y="323.57" width="5.70" height="1.1" fill="#1a1a1a"/><rect x="65.30" y="333.49" width="5.70" height="1.1" fill="#1a1a1a"/><rect x="65.30" y="343.42" width="5.70" height="1.1" fill="#1a1a1a"/><rect x="52.50" y="353.35" width="18.50" height="1.1" fill="#1a1a1a"/><rect x="65.30" y="363.28" width="5.70" height="1.1" fill="#1a1a1a"/><rect x="65.30" y="373.21" width="5.70" height="1.1" fill="#1a1a1a"/><rect x="65.30" y="383.13" width="5.70" height="1.1" fill="#1a1a1a"/><rect x="65.30" y="393.06" width="5.70" height="1.1" fill="#1a1a1a"/><rect x="61.50" y="402.99" width="9.50" height="1.1" fill="#1a1a1a"/><rect x="65.30" y="412.92" width="5.70" height="1.1" fill="#1a1a1a"/><rect x="65.30" y="422.85" width="5.70" height="1.1" fill="#1a1a1a"/><rect x="65.30" y="432.77" width="5.70" height="1.1" fill="#1a1a1a"/><rect x="65.30" y="442.70" width="5.70" height="1.1" fill="#1a1a1a"/><rect x="52.50" y="452.63" width="18.50" height="1.1" fill="#1a1a1a"/><rect x="65.30" y="462.56" width="5.70" height="1.1" fill="#1a1a1a"/><rect x="65.30" y="472.49" width="5.70" height="1.1" fill="#1a1a1a"/><rect x="65.30" y="482.41" width="5.70" height="1.1" fill="#1a1a1a"/><rect x="65.30" y="492.34" width="5.70" height="1.1" fill="#1a1a1a"/><rect x="61.50" y="502.27" width="9.50" height="1.1" fill="#1a1a1a"/><rect x="65.30" y="512.20" width="5.70" height="1.1" fill="#1a1a1a"/><rect x="65.30" y="522.13" width="5.70" height="1.1" fill="#1a1a1a"/><rect x="65.30" y="532.05" width="5.70" height="1.1" fill="#1a1a1a"/><rect x="65.30" y="541.98" width="5.70" height="1.1" fill="#1a1a1a"/><rect x="52.50" y="551.91" width="18.50" height="1.1" fill="#1a1a1a"/><rect x="65.30" y="561.84" width="5.70" height="1.1" fill="#1a1a1a"/><rect x="65.30" y="571.77" width="5.70" height="1.1" fill="#1a1a1a"/><rect x="65.30" y="581.69" width="5.70" height="1.1" fill="#1a1a1a"/><rect x="65.30" y="591.62" width="5.70" height="1.1" fill="#1a1a1a"/><rect x="61.50" y="601.55" width="9.50" height="1.1" fill="#1a1a1a"/><rect x="65.30" y="611.48" width="5.70" height="1.1" fill="#1a1a1a"/><rect x="65.30" y="621.41" width="5.70" height="1.1" fill="#1a1a1a"/><rect x="65.30" y="631.33" width="5.70" height="1.1" fill="#1a1a1a"/><rect x="65.30" y="641.26" width="5.70" height="1.1" fill="#1a1a1a"/><rect x="52.50" y="651.19" width="18.50" height="1.1" fill="#1a1a1a"/><rect x="65.30" y="661.12" width="5.70" height="1.1" fill="#1a1a1a"/><rect x="65.30" y="671.05" width="5.70" height="1.1" fill="#1a1a1a"/><rect x="65.30" y="680.97" width="5.70" height="1.1" fill="#1a1a1a"/><rect x="65.30" y="690.90" width="5.70" height="1.1" fill="#1a1a1a"/><rect x="61.50" y="700.83" width="9.50" height="1.1" fill="#1a1a1a"/><rect x="65.30" y="710.76" width="5.70" height="1.1" fill="#1a1a1a"/><rect x="65.30" y="720.69" width="5.70" height="1.1" fill="#1a1a1a"/><rect x="65.30" y="730.61" width="5.70" height="1.1" fill="#1a1a1a"/><rect x="65.30" y="740.54" width="5.70" height="1.1" fill="#1a1a1a"/><rect x="52.50" y="750.47" width="18.50" height="1.1" fill="#1a1a1a"/><rect x="65.30" y="760.40" width="5.70" height="1.1" fill="#1a1a1a"/><rect x="65.30" y="770.33" width="5.70" height="1.1" fill="#1a1a1a"/><rect x="65.30" y="780.25" width="5.70" height="1.1" fill="#1a1a1a"/><rect x="65.30" y="790.18" width="5.70" height="1.1" fill="#1a1a1a"/><rect x="61.50" y="800.11" width="9.50" height="1.1" fill="#1a1a1a"/><rect x="65.30" y="810.04" width="5.70" height="1.1" fill="#1a1a1a"/><rect x="65.30" y="819.97" width="5.70" height="1.1" fill="#1a1a1a"/><rect x="65.30" y="829.89" width="5.70" height="1.1" fill="#1a1a1a"/><path d="M756.2 157.5 H768.2 L762.2 163 Z" fill="#000"/><path d="M64.5 826.5 V838 L70.5 832.2 Z" fill="#000"/></svg>
<span class="t" style="left:283.72px;top:139.49px;font-size:13.60px;color:#1a1a1a;letter-spacing:0.401px;transform:scaleX(1.1300);">-250</span>
<span class="t" style="left:531.92px;top:139.49px;font-size:13.60px;color:#1a1a1a;transform:scaleX(1.3358);">0</span>
<span class="t" style="left:780.12px;top:139.49px;font-size:13.60px;color:#1a1a1a;transform:scaleX(1.1919);">250</span>
<span class="t" style="left:1028.32px;top:139.49px;font-size:13.60px;color:#1a1a1a;transform:scaleX(1.1919);">500</span>
<span class="t" style="left:60.6px;top:188.56px;font-size:13.6px;color:#1a1a1a;line-height:13px;letter-spacing:0.998px;transform-origin:0 0;transform:rotate(-90deg) translate(0,-11.30px);clip-path:none;">-200</span>
<span class="t" style="left:60.6px;top:287.84px;font-size:13.6px;color:#1a1a1a;line-height:13px;letter-spacing:0.998px;transform-origin:0 0;transform:rotate(-90deg) translate(0,-11.30px);clip-path:none;">-100</span>
<span class="t" style="left:60.6px;top:365.30px;font-size:13.6px;color:#1a1a1a;line-height:13px;letter-spacing:0.000px;transform-origin:0 0;transform:rotate(-90deg) translate(0,-11.30px);clip-path:none;">0</span>
<span class="t" style="left:60.6px;top:481.37px;font-size:13.6px;color:#1a1a1a;line-height:13px;letter-spacing:1.248px;transform-origin:0 0;transform:rotate(-90deg) translate(0,-11.30px);clip-path:none;">100</span>
<span class="t" style="left:60.6px;top:580.65px;font-size:13.6px;color:#1a1a1a;line-height:13px;letter-spacing:1.248px;transform-origin:0 0;transform:rotate(-90deg) translate(0,-11.30px);clip-path:none;">200</span>
<span class="t" style="left:60.6px;top:679.93px;font-size:13.6px;color:#1a1a1a;line-height:13px;letter-spacing:1.248px;transform-origin:0 0;transform:rotate(-90deg) translate(0,-11.30px);clip-path:none;">300</span>
<span class="t" style="left:60.6px;top:779.21px;font-size:13.6px;color:#1a1a1a;line-height:13px;letter-spacing:1.248px;transform-origin:0 0;transform:rotate(-90deg) translate(0,-11.30px);clip-path:none;">400</span>
<div style="left:44.50px;top:136.30px;width:26.00px;height:27.00px;border:1px solid #eceaea;border-radius:6px;background:#f8f6f7;box-sizing:border-box;"></div>
<svg style="left:45.10px;top:138.00px" width="24" height="24" viewBox="0 0 24 24"><rect x="5.8" y="11.2" width="12.5" height="9.5" rx="0.6" fill="#000"/><path d="M8.3 11.6 V7.95 A3.85 3.85 0 0 1 16 7.95 V11.6" fill="none" stroke="#000" stroke-width="2.2"/></svg>
<div style="left:1195.00px;top:163.00px;width:32.30px;height:675.00px;background:#cfcfcf;"></div>
<div style="left:1207.30px;top:355.00px;width:7.70px;height:288.00px;background:#7b8184;border-radius:4px;"></div>
<div style="left:44.00px;top:838.00px;width:1152.00px;height:22.00px;background:#cfcfcf;"></div>
<div style="left:47.00px;top:845.30px;width:1144.50px;height:7.70px;background:#7b8184;border-radius:4px;"></div>
<div style="left:1195.60px;top:136.50px;width:31.80px;height:26.00px;border:1px solid #e6e2e0;border-radius:6px;background:#f7f5f5;box-sizing:border-box;"></div>
<svg style="left:1199.40px;top:138.00px" width="24" height="24" viewBox="0 0 24 24"><rect x="4.3" y="5.3" width="15.6" height="11.2" rx="1.2" fill="none" stroke="#000" stroke-width="1.8"/><rect x="9.6" y="17.2" width="5" height="1.5" fill="#000"/><rect x="7.6" y="18.5" width="9" height="1.2" fill="#444"/></svg>
<div style="left:1195.40px;top:838.50px;width:31.80px;height:21.60px;border:1px solid #efe9ea;border-radius:5px;background:#f9f5f6;box-sizing:border-box;"></div>
<svg style="left:1199.20px;top:837.50px" width="24" height="24" viewBox="0 0 24 24"><circle cx="11.9" cy="7.4" r="4.35" fill="#fff" stroke="#222" stroke-width="1.4"/><circle cx="6.9" cy="16.3" r="4.35" fill="#9fdc9f" stroke="#222" stroke-width="1.4"/><circle cx="17.1" cy="16.3" r="4.35" fill="#ffb0d8" stroke="#222" stroke-width="1.4"/><circle cx="6.9" cy="16.3" r="2.7" fill="#0a9a0a"/><circle cx="17.1" cy="16.3" r="2.7" fill="#ff1493"/><rect x="11.2" y="13.4" width="1.6" height="5" fill="#000"/></svg>
<svg style="left:1231.00px;top:488.00px" width="8" height="20" viewBox="0 0 8 20"><circle cx="4" cy="4" r="2" fill="#000"/><circle cx="4" cy="9.7" r="2" fill="#000"/><circle cx="4" cy="15.4" r="2" fill="#000"/></svg>
<div style="left:1243.00px;top:188.50px;width:435.50px;height:665.00px;background:#fff;"></div>
<div style="left:1243.00px;top:143.00px;width:435.50px;height:45.50px;background:#e8e1df;"></div>
<div style="left:1334.00px;top:143.00px;width:215.00px;height:45.50px;background:#efe9e9;"></div>
<div style="left:1334.00px;top:185.50px;width:215.00px;height:3.00px;background:#3584e4;"></div>
<svg style="left:1275.50px;top:153.50px" width="24" height="24" viewBox="0 0 24 24"><path d="M5.8 3.9 H16.6 L13.1 8.1 H2.3 Z" fill="#2197de"/><path d="M8 10.1 H19.3 L15.8 13.9 H4.5 Z" fill="#0c5d8f"/><path d="M10.7 16.6 H21.9 L18.4 20.3 H7.2 Z" fill="#000"/></svg>
<svg style="left:1346.00px;top:152.50px" width="24" height="24" viewBox="0 0 24 24"><path d="M3.4 17 V3.1 H17.8" fill="none" stroke="#000" stroke-width="1.3"/><path d="M22.4 4 L13.4 16.9 L9.9 13.8 Z" fill="#000"/><path d="M10.2 14.5 L12.7 16.7 L11.6 18 L9.1 15.8 Z" fill="#444"/><path d="M8.8 16.3 L11.2 18.4 C9.8 20.6 6.6 21.8 3.4 21.8 C6.2 20 7.2 18.6 8.8 16.3 Z" fill="#2a9fe0"/></svg>
<span class="t" style="left:1370.73px;top:154.68px;font-size:16.50px;color:#2e3436;letter-spacing:0.098px;transform:scaleX(1.2200);font-weight:bold;">Fill and Stroke</span>
<svg style="left:1518.00px;top:159.00px" width="12" height="12" viewBox="0 0 12 12"><path d="M1.7 1.7 L10.3 10.1 M10.3 1.7 L1.7 10.1" stroke="#565656" stroke-width="2.3" fill="none"/></svg>
<div style="left:1640.00px;top:146.20px;width:38.50px;height:37.00px;border-radius:6px;background:#eee8e9;"></div>
<svg style="left:1649.00px;top:157.00px" width="20" height="14" viewBox="0 0 20 14"><path d="M2.9 3.8 L9.8 10.6 L16.7 3.8" stroke="#5e5c5c" stroke-width="2.2" fill="none"/></svg>
<div style="left:1244.00px;top:191.00px;width:433.50px;height:534.00px;border:1px solid #d2cbc9;box-sizing:border-box;background:#fff;"></div>
<div style="left:1245.00px;top:192.00px;width:431.50px;height:33.50px;background:#e8e1df;border-bottom:1px solid #d8d2d0;"></div>
<div style="left:1254.00px;top:224.00px;width:72.00px;height:3.30px;background:#3584e4;"></div>
<div style="left:1264.60px;top:201.00px;width:16.00px;height:16.00px;background:#000;border-radius:1px;"></div>
<span class="t" style="left:1286.93px;top:199.78px;font-size:16.50px;color:#2e3436;letter-spacing:0.302px;transform:scaleX(1.2200);font-weight:bold;">Fill</span>
<div style="left:1347.10px;top:201.00px;width:15.60px;height:15.60px;border:2.2px solid #2e3436;border-radius:2px;box-sizing:border-box;"></div>
<span class="t" style="left:1369.53px;top:199.78px;font-size:16.50px;color:#9c9898;letter-spacing:0.138px;transform:scaleX(1.2200);font-weight:bold;">Stroke paint</span>
<svg style="left:1513.00px;top:197.00px" width="24" height="24" viewBox="0 0 24 24"><path d="M3.5 7.4 H14.4" stroke="#1e9be0" stroke-width="2"/><path d="M13.6 3.6 L19.8 7.4 L13.6 11.2 Z" fill="#1e9be0"/><path d="M4.6 13.6 H7.7 M10.4 13.6 H13.5" stroke="#000" stroke-width="1.7"/><path d="M3.5 18.9 H19.9" stroke="#000" stroke-width="1.8"/></svg>
<span class="t" style="left:1539.83px;top:199.78px;font-size:16.50px;color:#9c9898;letter-spacing:0.071px;transform:scaleX(1.2200);font-weight:bold;">Stroke style</span>
<svg style="left:1260.00px;top:241.00px" width="16" height="16" viewBox="0 0 16 16"><path d="M2.6 3.3 L12.2 12.5 M12.2 3.3 L2.6 12.5" stroke="#8f8f8f" stroke-width="2" fill="none"/></svg><div style="left:1292.50px;top:239.00px;width:19.70px;height:19.80px;background:#9fd6f5;"></div><div style="left:1327.70px;top:239.00px;width:19.50px;height:19.80px;background:linear-gradient(90deg,#9fd6f5 10%,#939393 95%);"></div><div style="left:1362.70px;top:239.00px;width:19.60px;height:19.80px;background:radial-gradient(circle at 50% 50%,#9fd6f5 18%,#939393 70%);"></div><div style="left:1397.80px;top:239.00px;width:19.40px;height:19.80px;background:linear-gradient(135deg,#9fd6f5 5%,#939393 36%,#939393 64%,#9fd6f5 95%);"></div><svg style="left:1432.30px;top:239.00px" width="19.7" height="19.8" viewBox="0 0 19.7 19.8"><path d="M3.30 4.5 L7.50 9.4 L3.30 14.3 L-0.90 9.4 Z" fill="#939393"/><path d="M-0.30 0 H6.90 L3.30 4.5 Z" fill="#939393"/><path d="M-0.90 19.8 H7.50 L3.30 14.3 Z" fill="#939393"/><path d="M12.40 4.5 L16.60 9.4 L12.40 14.3 L8.20 9.4 Z" fill="#939393"/><path d="M8.80 0 H16.00 L12.40 4.5 Z" fill="#939393"/><path d="M8.20 19.8 H16.60 L12.40 14.3 Z" fill="#939393"/><path d="M21.50 4.5 L25.70 9.4 L21.50 14.3 L17.30 9.4 Z" fill="#939393"/><path d="M17.90 0 H25.10 L21.50 4.5 Z" fill="#939393"/><path d="M17.30 19.8 H25.70 L21.50 14.3 Z" fill="#939393"/></svg><div style="left:1467.50px;top:239.00px;width:19.80px;height:19.80px;border:1.3px solid #939393;box-sizing:border-box;background:#fff;"></div><div style="left:1471.30px;top:243.00px;width:12.60px;height:11.70px;background:#9fd6f5;"></div><span class="t" style="left:1504.48px;top:239.12px;font-size:26.50px;color:#959595;transform:scaleX(0.9007);font-weight:bold;">?</span><div style="left:1530.30px;top:231.40px;width:34.50px;height:34.20px;border:1px solid #dbd4d2;border-radius:6px;background:#ebebeb;box-sizing:border-box;"></div><svg style="left:1537.00px;top:238.70px" width="20.4" height="20.4" viewBox="0 0 20.4 20.4"><path d="M10.2 4.4 C9.7 1.8 7.7 0 5.1 0 C2 0 0 2.7 0 6.8 C0 13.6 4.3 20.4 10.2 20.4 C16.1 20.4 20.4 13.6 20.4 6.8 C20.4 2.7 18.4 0 15.3 0 C12.7 0 10.7 1.8 10.2 4.4 Z M10.2 2.6 C10 7.4 5.8 10.2 5.8 13.6 C5.8 16.2 7.7 17.9 10.2 17.9 C12.7 17.9 14.6 16.2 14.6 13.6 C14.6 10.2 10.4 7.4 10.2 2.6 Z" fill="#8f8f8f" fill-rule="evenodd"/></svg><svg style="left:1572.20px;top:238.70px" width="20.4" height="20.4" viewBox="0 0 20.4 20.4"><path d="M10.2 4.4 C9.7 1.8 7.7 0 5.1 0 C2 0 0 2.7 0 6.8 C0 13.6 4.3 20.4 10.2 20.4 C16.1 20.4 20.4 13.6 20.4 6.8 C20.4 2.7 18.4 0 15.3 0 C12.7 0 10.7 1.8 10.2 4.4 Z" fill="#939193"/></svg>
<span class="t" style="left:1254.53px;top:271.78px;font-size:16.50px;color:#2e3436;transform:scaleX(1.1901);font-weight:bold;">No objects</span>
<span class="t" style="left:1422.47px;top:740.13px;font-size:15.80px;color:#9b9999;letter-spacing:0.181px;transform:scaleX(1.1300);">Blend mode:</span>
<div style="left:1525.20px;top:729.80px;width:149.20px;height:41.00px;border:1px solid #d5cfcd;border-radius:6px;background:#fff;box-sizing:border-box;"></div>
<span class="t" style="left:1539.47px;top:740.13px;font-size:15.80px;color:#9b9999;letter-spacing:0.523px;transform:scaleX(1.1300);">Normal</span>
<svg style="left:1645.00px;top:746.00px" width="16" height="10" viewBox="0 0 16 10"><path d="M1.2 1.8 H14.2 L7.7 8 Z" fill="#8f8d8d"/></svg>
<div style="left:1249.20px;top:776.00px;width:423.10px;height:32.50px;border:1px solid #d5cfcd;border-radius:5px;background:#fefcfc;box-sizing:border-box;"></div>
<div style="left:1575.00px;top:777.00px;width:1.00px;height:30.50px;background:#d5cfcd;"></div>
<div style="left:1629.30px;top:777.00px;width:1.00px;height:30.50px;background:#f0e6e8;"></div>
<div style="left:1650.50px;top:777.00px;width:1.00px;height:30.50px;background:#f0e6e8;"></div>
<span class="t" style="left:1254.27px;top:783.03px;font-size:15.80px;color:#a5a3a3;letter-spacing:0.331px;transform:scaleX(1.1300);">Blur (%)</span>
<span class="t" style="left:1582.97px;top:783.03px;font-size:15.80px;color:#a5a3a3;transform:scaleX(1.1972);">0.0</span>
<div style="left:1633.30px;top:791.35px;width:13.00px;height:1.80px;background:#d6d4d3;"></div>
<div style="left:1654.50px;top:791.35px;width:13.00px;height:1.80px;background:#d6d4d3;"></div>
<div style="left:1660.10px;top:785.75px;width:1.80px;height:13.00px;background:#d6d4d3;"></div>
<div style="left:1249.20px;top:814.50px;width:423.10px;height:32.80px;border:1px solid #d5cfcd;border-radius:5px;background:#fefcfc;box-sizing:border-box;"></div>
<div style="left:1575.00px;top:815.50px;width:1.00px;height:30.80px;background:#d5cfcd;"></div>
<div style="left:1629.30px;top:815.50px;width:1.00px;height:30.80px;background:#f0e6e8;"></div>
<div style="left:1650.50px;top:815.50px;width:1.00px;height:30.80px;background:#f0e6e8;"></div>
<span class="t" style="left:1254.27px;top:821.83px;font-size:15.80px;color:#a5a3a3;letter-spacing:0.375px;transform:scaleX(1.1300);">Opacity (%)</span>
<span class="t" style="left:1582.97px;top:821.83px;font-size:15.80px;color:#a5a3a3;transform:scaleX(1.1972);">0.0</span>
<div style="left:1633.30px;top:830.00px;width:13.00px;height:1.80px;background:#d6d4d3;"></div>
<div style="left:1654.50px;top:830.00px;width:13.00px;height:1.80px;background:#d6d4d3;"></div>
<div style="left:1660.10px;top:824.40px;width:1.80px;height:13.00px;background:#d6d4d3;"></div>
<div style="left:0.00px;top:862.50px;width:43.00px;height:41.50px;background:#fff;"></div>
<svg style="left:0.00px;top:862.00px" width="44" height="43" viewBox="0 0 44 43"><path d="M4.6 5 L39 38 M39 5 L4.6 38" stroke="#cc2939" stroke-width="3.2" stroke-linecap="round" fill="none"/></svg>
<div style="left:43.80px;top:862.50px;width:41.20px;height:41.50px;background:#000;"></div>
<div style="left:86.00px;top:862.50px;width:41.70px;height:41.50px;background:#858385;"></div>
<div style="left:128.70px;top:862.50px;width:41.50px;height:41.50px;background:#fff;"></div>
<div style="left:171.20px;top:884.00px;width:19.77px;height:20.00px;background:#1a1a1a;"></div>
<div style="left:192.46px;top:884.00px;width:19.77px;height:20.00px;background:#333333;"></div>
<div style="left:213.73px;top:884.00px;width:19.77px;height:20.00px;background:#4d4f4c;"></div>
<div style="left:235.00px;top:884.00px;width:19.77px;height:20.00px;background:#666765;"></div>
<div style="left:256.26px;top:884.00px;width:19.77px;height:20.00px;background:#9b999b;"></div>
<div style="left:277.52px;top:884.00px;width:19.77px;height:20.00px;background:#b3b1b3;"></div>
<div style="left:298.79px;top:884.00px;width:19.77px;height:20.00px;background:#cccccc;"></div>
<div style="left:320.06px;top:884.00px;width:19.77px;height:20.00px;background:#e5e5e5;"></div>
<div style="left:341.32px;top:884.00px;width:19.77px;height:20.00px;background:#ececec;"></div>
<div style="left:362.58px;top:884.00px;width:19.77px;height:20.00px;background:#f6f2f4;"></div>
<div style="left:383.85px;top:884.00px;width:19.77px;height:20.00px;background:#fefcfe;"></div>
<div style="left:405.12px;top:884.00px;width:19.77px;height:20.00px;background:#800000;"></div>
<div style="left:426.38px;top:884.00px;width:19.77px;height:20.00px;background:#ff0000;"></div>
<div style="left:447.64px;top:884.00px;width:19.77px;height:20.00px;background:#808000;"></div>
<div style="left:468.91px;top:884.00px;width:19.77px;height:20.00px;background:#ffff00;"></div>
<div style="left:490.18px;top:884.00px;width:19.77px;height:20.00px;background:#008000;"></div>
<div style="left:511.44px;top:884.00px;width:19.77px;height:20.00px;background:#00ff00;"></div>
<div style="left:532.70px;top:884.00px;width:19.77px;height:20.00px;background:#008080;"></div>
<div style="left:553.97px;top:884.00px;width:19.77px;height:20.00px;background:#00ffff;"></div>
<div style="left:575.24px;top:884.00px;width:19.77px;height:20.00px;background:#000080;"></div>
<div style="left:596.50px;top:884.00px;width:19.77px;height:20.00px;background:#0000ff;"></div>
<div style="left:617.76px;top:884.00px;width:19.77px;height:20.00px;background:#800080;"></div>
<div style="left:639.03px;top:884.00px;width:19.77px;height:20.00px;background:#ff00ff;"></div>
<div style="left:660.30px;top:884.00px;width:19.77px;height:20.00px;background:#2b0000;"></div>
<div style="left:681.56px;top:884.00px;width:19.77px;height:20.00px;background:#550000;"></div>
<div style="left:702.83px;top:884.00px;width:19.77px;height:20.00px;background:#800000;"></div>
<div style="left:724.09px;top:884.00px;width:19.77px;height:20.00px;background:#aa0000;"></div>
<div style="left:745.36px;top:884.00px;width:19.77px;height:20.00px;background:#d40000;"></div>
<div style="left:766.62px;top:884.00px;width:19.77px;height:20.00px;background:#ff0000;"></div>
<div style="left:787.88px;top:884.00px;width:19.77px;height:20.00px;background:#ff2a2a;"></div>
<div style="left:809.15px;top:884.00px;width:19.77px;height:20.00px;background:#ff5555;"></div>
<div style="left:830.41px;top:884.00px;width:19.77px;height:20.00px;background:#ff8080;"></div>
<div style="left:851.68px;top:884.00px;width:19.77px;height:20.00px;background:#ffaaaa;"></div>
<div style="left:872.94px;top:884.00px;width:19.77px;height:20.00px;background:#ffd5d5;"></div>
<div style="left:894.21px;top:884.00px;width:19.77px;height:20.00px;background:#280b0b;"></div>
<div style="left:915.47px;top:884.00px;width:19.77px;height:20.00px;background:#501616;"></div>
<div style="left:936.74px;top:884.00px;width:19.77px;height:20.00px;background:#782121;"></div>
<div style="left:958.01px;top:884.00px;width:19.77px;height:20.00px;background:#a02c2c;"></div>
<div style="left:979.27px;top:884.00px;width:19.77px;height:20.00px;background:#c83737;"></div>
<div style="left:1000.54px;top:884.00px;width:19.77px;height:20.00px;background:#d35f5f;"></div>
<div style="left:1021.80px;top:884.00px;width:19.77px;height:20.00px;background:#de8787;"></div>
<div style="left:1043.07px;top:884.00px;width:19.77px;height:20.00px;background:#e9afaf;"></div>
<div style="left:1064.33px;top:884.00px;width:19.77px;height:20.00px;background:#f4d7d7;"></div>
<div style="left:1085.60px;top:884.00px;width:19.77px;height:20.00px;background:#241c1c;"></div>
<div style="left:1106.86px;top:884.00px;width:19.77px;height:20.00px;background:#483737;"></div>
<div style="left:1128.12px;top:884.00px;width:19.77px;height:20.00px;background:#6c5353;"></div>
<div style="left:1149.39px;top:884.00px;width:19.77px;height:20.00px;background:#916f6f;"></div>
<div style="left:1170.65px;top:884.00px;width:19.77px;height:20.00px;background:#ac9393;"></div>
<div style="left:1191.92px;top:884.00px;width:19.77px;height:20.00px;background:#c8b7b7;"></div>
<div style="left:1213.19px;top:884.00px;width:19.77px;height:20.00px;background:#e3dbdb;"></div>
<div style="left:1234.45px;top:884.00px;width:19.77px;height:20.00px;background:#2b1100;"></div>
<div style="left:1255.72px;top:884.00px;width:19.77px;height:20.00px;background:#552200;"></div>
<div style="left:1276.98px;top:884.00px;width:19.77px;height:20.00px;background:#803300;"></div>
<div style="left:1298.25px;top:884.00px;width:19.77px;height:20.00px;background:#aa4400;"></div>
<div style="left:1319.51px;top:884.00px;width:19.77px;height:20.00px;background:#d45500;"></div>
<div style="left:1340.78px;top:884.00px;width:19.77px;height:20.00px;background:#ff6600;"></div>
<div style="left:1362.04px;top:884.00px;width:19.77px;height:20.00px;background:#ff7f2a;"></div>
<div style="left:1383.31px;top:884.00px;width:19.77px;height:20.00px;background:#ff9955;"></div>
<div style="left:1404.57px;top:884.00px;width:19.77px;height:20.00px;background:#ffb380;"></div>
<div style="left:1425.84px;top:884.00px;width:19.77px;height:20.00px;background:#ffccaa;"></div>
<div style="left:1447.10px;top:884.00px;width:19.77px;height:20.00px;background:#ffe6d5;"></div>
<div style="left:1468.37px;top:884.00px;width:19.77px;height:20.00px;background:#28170b;"></div>
<div style="left:1489.63px;top:884.00px;width:19.77px;height:20.00px;background:#502d16;"></div>
<div style="left:1510.89px;top:884.00px;width:19.77px;height:20.00px;background:#784421;"></div>
<div style="left:1532.16px;top:884.00px;width:19.77px;height:20.00px;background:#a05a2c;"></div>
<div style="left:1553.43px;top:884.00px;width:19.77px;height:20.00px;background:#c87137;"></div>
<svg style="left:1590.00px;top:874.00px" width="20" height="16" viewBox="0 0 20 16"><path d="M3 12.5 L9.6 5.5 L16.2 12.5" stroke="#000" stroke-width="2.4" fill="none"/></svg>
<svg style="left:1629.00px;top:874.00px" width="20" height="16" viewBox="0 0 20 16"><path d="M3 4.5 L9.6 11.5 L16.2 4.5" stroke="#000" stroke-width="2.4" fill="none"/></svg>
<div style="left:1660.00px;top:871.30px;width:22.60px;height:33.00px;border:1px solid #d6d0cd;border-radius:6px;background:#f1eeed;box-sizing:border-box;"></div>
<svg style="left:1663.20px;top:879.50px" width="16" height="18" viewBox="0 0 16 18"><path d="M2 3.2 H14 M2 8.2 H14 M2 13.2 H14" stroke="#000" stroke-width="2.6" fill="none"/></svg>
<span class="t" style="left:29.37px;top:907.53px;font-size:15.80px;color:#2e3436;letter-spacing:0.515px;transform:scaleX(1.1300);">Fill:</span>
<span class="t" style="left:1.97px;top:929.13px;font-size:15.80px;color:#2e3436;letter-spacing:0.138px;transform:scaleX(1.1300);">Stroke:</span>
<span class="t" style="left:94.47px;top:907.53px;font-size:15.80px;color:#2e3436;transform:scaleX(1.1312);">N/A</span>
<span class="t" style="left:94.47px;top:929.13px;font-size:15.80px;color:#2e3436;transform:scaleX(1.1312);">N/A</span>
<span class="t" style="left:195.87px;top:917.53px;font-size:15.80px;color:#2e3436;transform:scaleX(1.0850);">O:</span>
<div style="left:216.80px;top:907.30px;width:88.50px;height:41.00px;border:1px solid #d8d2d0;border-radius:6px;background:#fdfbfb;box-sizing:border-box;"></div>
<div style="left:263.50px;top:908.30px;width:1.00px;height:40.00px;background:#efe6e7;"></div>
<div style="left:284.60px;top:908.30px;width:1.00px;height:40.00px;background:#efe6e7;"></div>
<span class="t" style="left:224.57px;top:917.53px;font-size:15.80px;color:#a3a1a0;transform:scaleX(1.1568);">100</span>
<div style="left:267.50px;top:927.20px;width:13.00px;height:1.80px;background:#d2d0cf;"></div>
<div style="left:288.50px;top:927.20px;width:13.00px;height:1.80px;background:#d2d0cf;"></div>
<div style="left:294.10px;top:921.60px;width:1.80px;height:13.00px;background:#d2d0cf;"></div>
<div style="left:326.50px;top:917.30px;width:3.60px;height:20.00px;background:#729fcf;"></div>
<span class="t" style="left:337.17px;top:917.53px;font-size:15.80px;color:#2e3436;letter-spacing:0.065px;transform:scaleX(1.1300);">Layer 1</span>
<svg style="left:420.70px;top:915.50px" width="24" height="24" viewBox="0 0 24 24"><ellipse cx="11.9" cy="13.5" rx="7.6" ry="4.6" fill="none" stroke="#000" stroke-width="2.2"/><circle cx="11.7" cy="13.2" r="2.5" fill="#000"/><path d="M11.7 3.7 V8.8 M3.9 6.9 L6.8 9.8 M19.7 6.9 L16.8 9.8" stroke="#000" stroke-width="2" fill="none"/></svg>
<svg style="left:467.00px;top:916.00px" width="24" height="24" viewBox="0 0 24 24"><rect x="4.4" y="11.3" width="12.5" height="8.9" rx="0.6" fill="#000"/><path d="M13.2 11.6 V7.4 A3.1 3.1 0 0 1 19.4 7.4 V9.8" fill="none" stroke="#000" stroke-width="2.2"/></svg>
<div style="left:500.00px;top:914.00px;width:1.00px;height:28.00px;background:#e2e0de;"></div>
<span class="t" style="left:515.37px;top:907.23px;font-size:15.80px;color:#2e3436;letter-spacing:0.281px;transform:scaleX(1.1300);">No objects selected. Click, Shift+click, Alt+scroll mouse on top of objects, or drag around</span>
<span class="t" style="left:515.37px;top:928.53px;font-size:15.80px;color:#2e3436;letter-spacing:0.287px;transform:scaleX(1.1300);">objects to select.</span>
<span class="t" style="left:1261.97px;top:907.53px;font-size:15.80px;color:#2e3436;transform:scaleX(1.1586);">X:</span>
<span class="t" style="left:1261.97px;top:929.03px;font-size:15.80px;color:#2e3436;transform:scaleX(1.0597);">Y:</span>
<span class="t" style="left:1295.87px;top:907.53px;font-size:15.80px;color:#2e3436;letter-spacing:0.121px;transform:scaleX(1.1300);">235.33</span>
<span class="t" style="left:1295.87px;top:929.03px;font-size:15.80px;color:#2e3436;letter-spacing:0.121px;transform:scaleX(1.1300);">483.25</span>
<span class="t" style="left:1363.57px;top:917.53px;font-size:15.80px;color:#2e3436;transform:scaleX(1.1464);">Z:</span>
<div style="left:1381.30px;top:907.70px;width:123.20px;height:42.00px;border:1px solid #d8d2d0;border-radius:6px;background:#fff;box-sizing:border-box;"></div>
<div style="left:1449.00px;top:908.70px;width:1.00px;height:40.00px;background:#ece8e6;"></div>
<div style="left:1475.70px;top:908.70px;width:1.00px;height:40.00px;background:#ece8e6;"></div>
<span class="t" style="left:1395.57px;top:917.53px;font-size:15.80px;color:#2e3436;transform:scaleX(1.1541);">21%</span>
<div style="left:1455.50px;top:927.20px;width:14.00px;height:2.00px;background:#2e3436;"></div>
<div style="left:1482.20px;top:927.20px;width:14.00px;height:2.00px;background:#2e3436;"></div>
<div style="left:1488.20px;top:921.20px;width:2.00px;height:14.00px;background:#2e3436;"></div>
<span class="t" style="left:1516.67px;top:917.53px;font-size:15.80px;color:#2e3436;transform:scaleX(1.0884);">R:</span>
<div style="left:1534.40px;top:907.70px;width:133.60px;height:42.00px;border:1px solid #d8d2d0;border-radius:6px;background:#fff;box-sizing:border-box;"></div>
<div style="left:1613.10px;top:908.70px;width:1.00px;height:40.00px;background:#ece8e6;"></div>
<div style="left:1638.80px;top:908.70px;width:1.00px;height:40.00px;background:#ece8e6;"></div>
<span class="t" style="left:1554.77px;top:917.53px;font-size:15.80px;color:#2e3436;letter-spacing:0.444px;transform:scaleX(1.1300);">0.00°</span>
<div style="left:1619.30px;top:927.20px;width:14.00px;height:2.00px;background:#2e3436;"></div>
<div style="left:1646.00px;top:927.20px;width:14.00px;height:2.00px;background:#2e3436;"></div>
<div style="left:1652.00px;top:921.20px;width:2.00px;height:14.00px;background:#2e3436;"></div>
</div></body></html>
